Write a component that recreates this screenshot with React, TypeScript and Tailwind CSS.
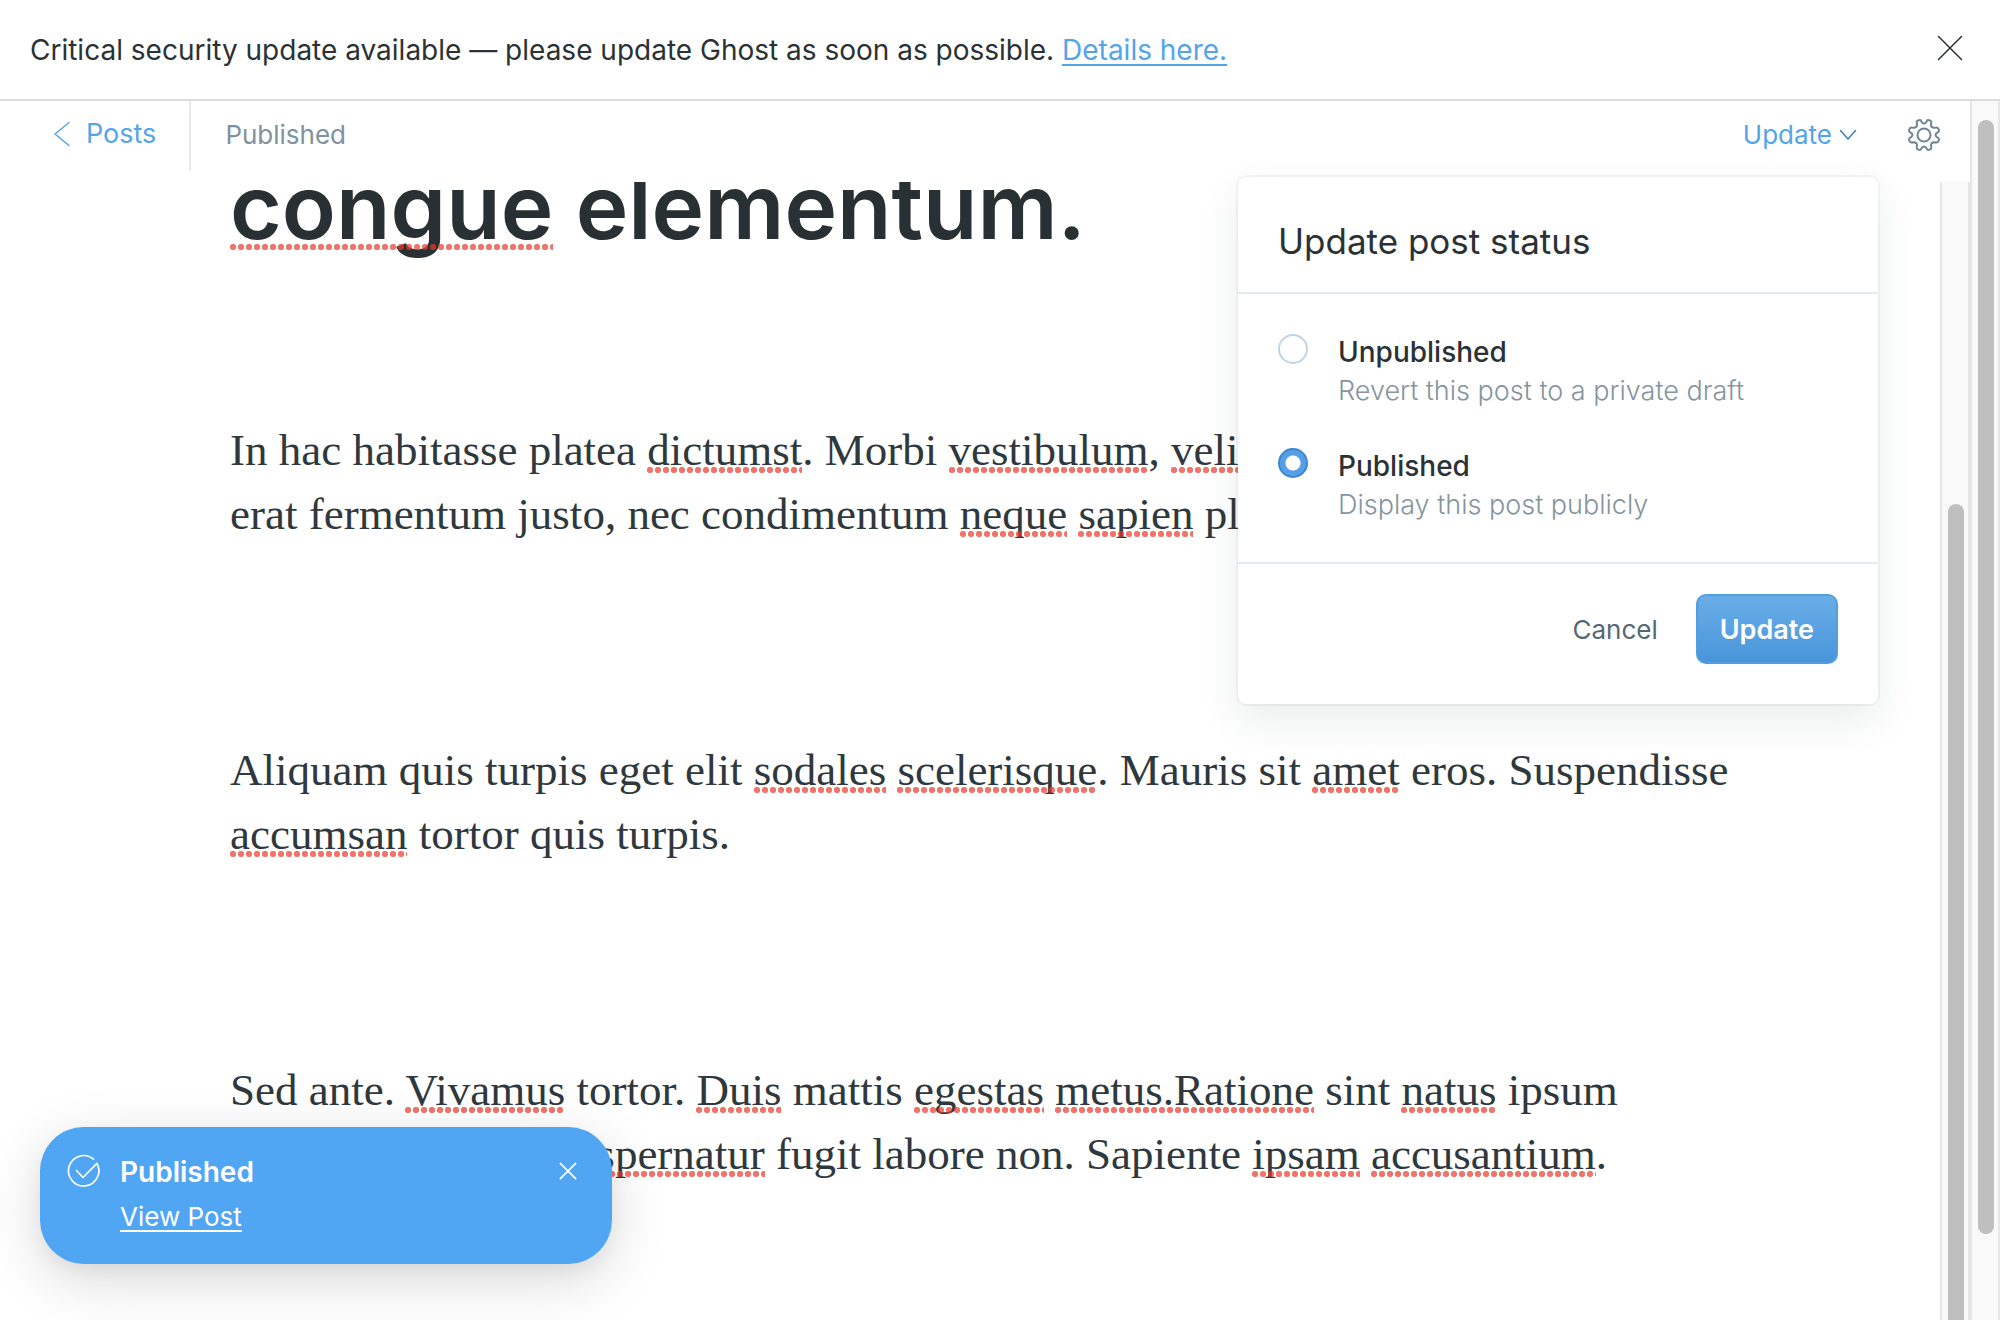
import type { ReactNode } from "react";

/** A word flagged by the spell checker. */
function Sp({ children }: { children: ReactNode }) {
  return (
    <span className="relative after:absolute after:inset-x-0 after:bottom-[2px] after:h-[6px] in-[h1]:after:bottom-[10px] after:bg-[radial-gradient(circle_at_3px_3px,#ea3829_2.8px,transparent_3.4px)] after:bg-[length:8px_6px] after:bg-repeat-x after:opacity-70">
      {children}
    </span>
  );
}

function CloseIcon({ className, width }: { className: string; width: number }) {
  return (
    <svg viewBox="0 0 24 24" className={className} fill="none" stroke="currentColor" strokeWidth={width} strokeLinecap="round" aria-hidden="true">
      <path d="M0.5 0.5 23.5 23.5M23.5 0.5 0.5 23.5" />
    </svg>
  );
}

function Banner() {
  return (
    <aside className="flex h-[101px] shrink-0 items-center justify-between border-b-2 border-[#dbdddd] pr-[38px] pl-[30px]">
      <p className="text-[28px] leading-[36px]">
        Critical security update available — please update Ghost as soon as possible.{" "}
        <a href="#details" className="text-[#54a4ea] underline decoration-2 underline-offset-4">
          Details here.
        </a>
      </p>
      <button type="button" aria-label="Dismiss" className="pb-[3px] text-[#2b3133]">
        <CloseIcon className="size-6 overflow-visible" width={1.5} />
      </button>
    </aside>
  );
}

function Header() {
  return (
    <header className="flex h-[81px] shrink-0 items-start">
      <a href="#posts" className="flex h-[69px] items-center gap-4 border-r-2 border-[#e3ebf2] pr-[33px] pb-[3px] pl-[54px] text-[27px] leading-[32px] text-[#54a4ea]">
        <svg viewBox="0 0 16 24" className="h-6 w-4 overflow-visible" fill="none" stroke="currentColor" strokeWidth="1.5" strokeLinecap="round" strokeLinejoin="round" aria-hidden="true">
          <path d="M15 0.5 1 12 15 23.5" />
        </svg>
        Posts
      </a>
      <span className="flex h-[69px] items-center pb-[2px] pl-[34px] text-[26px] leading-[32px] text-[#7f929d]">Published</span>
      <div className="ml-auto flex h-[69px] items-center gap-[52px] pr-[30px] pb-[2px]">
        <button type="button" className="flex items-center gap-2 text-[26px] leading-[32px] text-[#54a4ea]">
          Update
          <svg viewBox="0 0 16 10" className="h-[10px] w-4 overflow-visible" fill="none" stroke="#3f7cb3" strokeWidth="1.5" strokeLinecap="round" strokeLinejoin="round" aria-hidden="true">
            <path d="M0.5 0.5 8 9 15.5 0.5" />
          </svg>
        </button>
        <button type="button" aria-label="Settings" className="text-[#6f8691]">
          <svg viewBox="0 0 32 32" className="size-8 overflow-visible" fill="none" stroke="currentColor" strokeWidth="2" strokeLinejoin="round" aria-hidden="true">
            <circle cx="16" cy="16" r="6.5" />
            <path d="M13.9 3.3 13.1 1.9Q12.5 0.7 11.2 1.1L9.6 1.7Q8.400 2.3 8.700 3.6L9 5.2Q9.200 8.6 5.8 8.7L3.6 8.6Q2.3 8.5 1.7 9.7L1.1 11.2Q0.7 12.5 1.9 13.2L3.2 14Q5.7 16 3.2 18L1.9 18.8Q0.7 19.5 1.1 20.8L1.7 22.3Q2.3 23.5 3.6 23.4L5.8 23.3Q9.2 23.4 9 26.8L8.7 28.4Q8.4 29.7 9.6 30.3L11.2 30.9Q12.5 31.3 13.1 30.1L13.9 28.7Q16 26.3 18.1 28.7L18.9 30.1Q19.5 31.3 20.8 30.9L22.4 30.3Q23.6 29.7 23.3 28.4L23 26.8Q22.8 23.4 26.2 23.3L28.4 23.4Q29.7 23.5 30.3 22.3L30.9 20.8Q31.3 19.5 30.1 18.8L28.8 18Q26.3 16 28.8 14L30.1 13.2Q31.3 12.5 30.9 11.2L30.3 9.7Q29.7 8.5 28.4 8.6L26.2 8.7Q22.8 8.6 23 5.2L23.3 3.6Q23.6 2.3 22.4 1.7L20.8 1.1Q19.5 0.7 18.9 1.9L18.1 3.3Q16 5.7 13.9 3.3Z" />
          </svg>
        </button>
      </div>
    </header>
  );
}

function Editor() {
  return (
    <article className="relative min-w-0 flex-1 overflow-hidden pl-[230px]">
      <h1 className="-mt-[30px] text-[89px] leading-[110px] font-semibold whitespace-nowrap text-[#293033]">
        <Sp>congue</Sp> elementum.
      </h1>
      <div className="mt-[156px] flex flex-col gap-48 font-['Liberation_Serif',serif] text-[45px] leading-[64px] whitespace-nowrap text-[#2f383c]">
        <p>
          In hac habitasse platea <Sp>dictumst</Sp>. Morbi <Sp>vestibulum</Sp>, <Sp>velit</Sp> id pretium,
          <br />
          erat fermentum justo, nec condimentum <Sp>neque</Sp> <Sp>sapien</Sp> placerat ante.
        </p>
        <p>
          Aliquam quis turpis eget elit <Sp>sodales</Sp> <Sp>scelerisque</Sp>. Mauris sit <Sp>amet</Sp> eros. Suspendisse
          <br />
          <Sp>accumsan</Sp> tortor quis turpis.
        </p>
        <p>
          Sed ante. <Sp>Vivamus</Sp> tortor. <Sp>Duis</Sp> mattis <Sp>egestas</Sp> <Sp>metus.Ratione</Sp> sint <Sp>natus</Sp> ipsum
          <br />
          explicabo dolorem <Sp>aspernatur</Sp> fugit labore non. Sapiente <Sp>ipsam</Sp> <Sp>accusantium</Sp>.
        </p>
      </div>
    </article>
  );
}

function StatusOption({ id, label, hint, checked }: { id: string; label: string; hint: string; checked?: boolean }) {
  return (
    <div className="flex gap-[30px]">
      <input
        type="radio"
        id={id}
        name="status"
        defaultChecked={checked}
        className="size-[30px] shrink-0 appearance-none rounded-full border-2 border-[#c0d4e5] bg-white checked:border-[#3d87d0] checked:bg-[radial-gradient(circle,#fff_7px,#559fe4_8px)]"
      />
      <label htmlFor={id} className="flex flex-col">
        <span className="text-[28px] leading-[36px] font-medium text-[#2b3235]">{label}</span>
        <span className="text-[27px] leading-[42px] font-light text-[#85959e]">{hint}</span>
      </label>
    </div>
  );
}

function StatusDialog() {
  return (
    <section role="dialog" aria-labelledby="status-title" className="absolute top-[177px] right-[122px] w-[640px] rounded-lg bg-white shadow-[0_0_0_2px_rgba(0,0,0,0.04),0_16px_40px_rgba(30,50,60,0.09)]">
      <h2 id="status-title" className="border-b-2 border-[#e3ebf2] px-10 pt-[42px] pb-[29px] text-[35px] leading-[44px] text-[#2b3235]">
        Update post status
      </h2>
      <div className="flex flex-col gap-9 border-b-2 border-[#e3ebf2] px-10 pt-10 pb-9">
        <StatusOption id="unpublished" label="Unpublished" hint="Revert this post to a private draft" />
        <StatusOption id="published" label="Published" hint="Display this post publicly" checked />
      </div>
      <div className="flex items-center justify-end gap-[38px] px-10 pt-[30px] pb-10">
        <button type="button" className="pt-[2px] text-[26px] leading-[32px] text-[#586872]">
          Cancel
        </button>
        <button type="button" className="h-[70px] rounded-[10px] border-2 border-[#519fe2] bg-linear-to-b from-[#6aaee8] to-[#4895da] px-[22px] pt-[2px] text-[27px] leading-[32px] font-semibold text-white">
          Update
        </button>
      </div>
    </section>
  );
}

function Toast() {
  return (
    <div role="status" className="absolute bottom-[56px] left-10 flex h-[137px] w-[572px] items-start rounded-[44px] bg-[#50a6f2] pt-[25px] pr-9 pl-7 text-white shadow-[0_16px_60px_rgba(0,0,0,0.14),0_8px_20px_rgba(0,0,0,0.05)]">
      <svg viewBox="0 0 32 32" className="mt-[3px] size-8 overflow-visible" fill="none" stroke="currentColor" strokeWidth="1.7" strokeLinecap="round" strokeLinejoin="round" aria-hidden="true">
        <path d="M25.5 4.2A15.2 15.2 0 1 0 28.9 8.3L15 22.5 8.5 15.5" />
      </svg>
      <div className="ml-5 flex-1">
        <p className="text-[28px] leading-[40px] font-semibold">Published</p>
        <a href="#view" className="block w-fit text-[26px] leading-[50px] underline decoration-2 underline-offset-4">
          View Post
        </a>
      </div>
      <button type="button" aria-label="Close" className="mt-[11px]">
        <CloseIcon className="size-4 overflow-visible" width={2.5} />
      </button>
    </div>
  );
}

export default function App() {
  return (
    <div className="relative flex h-screen flex-col overflow-hidden bg-white font-[Inter,sans-serif] text-[#2b3235]">
      <Banner />
      <div className="flex min-h-0 flex-1">
        <main className="flex min-w-0 flex-1 flex-col">
          <Header />
          <div className="flex min-h-0 flex-1">
            <Editor />
            <div className="w-[30px] overflow-hidden border-x-2 border-[#e6e6e6] bg-[#f9f9f9] px-[6px] pt-[322px]">
              <div className="h-full w-4 rounded-t-lg bg-[#bfbfbf]" />
            </div>
          </div>
        </main>
        <div className="w-[30px] border-x-2 border-[#e6e6e6] bg-[#f9f9f9] px-[6px] pt-[19px] pb-[86px]">
          <div className="h-full w-4 rounded-full bg-[#bfbfbf]" />
        </div>
      </div>
      <StatusDialog />
      <Toast />
    </div>
  );
}
